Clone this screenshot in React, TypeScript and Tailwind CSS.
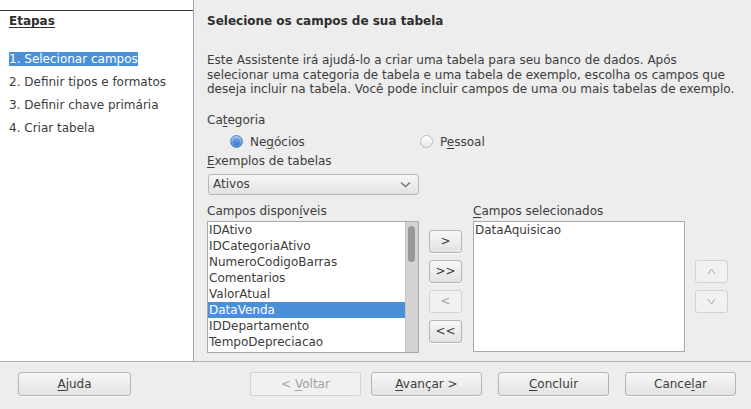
import React from 'react'

const btn =
  'flex items-center justify-center rounded-[3px] border border-[#b4b4b4] bg-gradient-to-b from-[#f7f7f7] to-[#e3e3e3] text-[#3c3c3c] shadow-[0_1px_0_rgba(255,255,255,0.8)]'
const btnOff =
  'flex items-center justify-center rounded-[3px] border border-[#d2d2d2] bg-[#f1f1f1] text-[#a3a3a3]'

const available = [
  'IDAtivo',
  'IDCategoriaAtivo',
  'NumeroCodigoBarras',
  'Comentarios',
  'ValorAtual',
  'DataVenda',
  'IDDepartamento',
  'TempoDepreciacao',
]

function Radio({ on }: { on?: boolean }) {
  if (on)
    return (
      <span className="flex h-[13px] w-[13px] items-center justify-center rounded-full border border-[#5485bd] bg-gradient-to-b from-[#a9c8ee] to-[#4a86d4]">
        <span className="h-[7px] w-[7px] rounded-full bg-gradient-to-b from-[#6fa4e6] to-[#3d7cd0]" />
      </span>
    )
  return <span className="h-[13px] w-[13px] rounded-full border border-[#bdbdbd] bg-gradient-to-b from-[#ffffff] to-[#e8e8e8]" />
}

export default function App() {
  return (
    <div className="flex h-[409px] w-[751px] flex-col overflow-hidden bg-[#ededed] font-['DejaVu_Sans',sans-serif] text-[12px] text-[#3c3c3c]">
      <div className="flex h-[361px]">
        {/* roadmap */}
        <div className="w-[194px] shrink-0 border-r border-[#a6a6a6] bg-white pt-[10px]">
          <div className="border-t border-[#3a3a3a] pl-[9px] pt-[2px]">
            <div className="font-bold leading-4 text-[#2e2e2e] underline underline-offset-2">Etapas</div>
            <div className="mt-[22px] flex flex-col gap-[7px] leading-4">
              <div>
                <span className="bg-[#4a90d9] text-white">1. Selecionar campos</span>
              </div>
              <div>2. Definir tipos e formatos</div>
              <div>3. Definir chave primária</div>
              <div>4. Criar tabela</div>
            </div>
          </div>
        </div>

        {/* page */}
        <div className="flex-1 pl-[13px] pt-[13px]">
          <div className="font-bold leading-4 text-[#2e2e2e]">Selecione os campos de sua tabela</div>
          <p className="mt-[24px] leading-[14.5px]">
            Este Assistente irá ajudá-lo a criar uma tabela para seu banco de dados. Após
            <br />
            selecionar uma categoria de tabela e uma tabela de exemplo, escolha os campos que
            <br />
            deseja incluir na tabela. Você pode incluir campos de uma ou mais tabelas de exemplo.
          </p>
          <div className="mt-[15px] leading-4">
            Ca<u className="underline-offset-2">t</u>egoria
          </div>
          <div className="mt-[6px] flex h-4 items-center leading-4">
            <div className="ml-[23px] flex w-[190px] items-center gap-[7px]">
              <Radio on />
              <span>
                Ne<u className="underline-offset-2">g</u>ócios
              </span>
            </div>
            <div className="flex items-center gap-[7px]">
              <Radio />
              <span>
                P<u className="underline-offset-2">e</u>ssoal
              </span>
            </div>
          </div>
          <div className="mt-[3px] leading-4">
            <u className="underline-offset-2">E</u>xemplos de tabelas
          </div>
          <div className="ml-px mt-[5px] flex h-[21px] w-[211px] items-center justify-between rounded-[3px] border border-[#b7b7b7] bg-gradient-to-b from-[#f7f7f7] to-[#e2e2e2] pl-[4px] pr-[7px]">
            <span>Ativos</span>
            <svg width="11" height="7" viewBox="0 0 11 7">
              <path d="M1 1.5 L5.5 5.5 L10 1.5" fill="none" stroke="#7a7a7a" strokeWidth="1.6" />
            </svg>
          </div>

          <div className="mt-[8px] flex">
            <div className="w-[212px]">
              <div className="leading-4">
                Campos dispon<u className="underline-offset-2">í</u>veis
              </div>
              <div className="mt-[2px] flex h-[132px] border border-[#a9a9a9] bg-white">
                <div className="flex-1 overflow-hidden">
                  {available.map((f) => (
                    <div
                      key={f}
                      className={`h-4 pl-[1px] leading-4 ${f === 'DataVenda' ? 'bg-[#4a90d9] text-white' : ''}`}
                    >
                      {f}
                    </div>
                  ))}
                </div>
                <div className="w-[13px] border-l border-[#c4c4c4] bg-[#d4d4d4] pl-[2px] pt-[4px]">
                  <div className="h-[36px] w-[7px] rounded-full bg-[#989898]" />
                </div>
              </div>
            </div>

            <div className="ml-[10px] flex flex-col gap-[7px] pt-[27px]">
              <button className={`${btn} h-[23px] w-[33px]`}>&gt;</button>
              <button className={`${btn} h-[23px] w-[33px]`}>&gt;&gt;</button>
              <button className={`${btnOff} h-[23px] w-[33px]`}>&lt;</button>
              <button className={`${btn} h-[23px] w-[33px]`}>&lt;&lt;</button>
            </div>

            <div className="ml-[11px] w-[212px]">
              <div className="leading-4">
                <u className="underline-offset-2">C</u>ampos selecionados
              </div>
              <div className="mt-[2px] h-[131px] border border-[#a9a9a9] bg-white pl-[1px] leading-4">
                DataAquisicao
              </div>
            </div>

            <div className="ml-[10px] flex flex-col gap-[7px] pt-[57px]">
              <button className={`${btnOff} h-[23px] w-[33px]`}>
                <svg width="9" height="7" viewBox="0 0 9 7">
                  <path d="M1 6 L4.5 1 L8 6" fill="none" stroke="#a8a8a8" strokeWidth="1" />
                </svg>
              </button>
              <button className={`${btnOff} h-[23px] w-[33px]`}>
                <svg width="9" height="7" viewBox="0 0 9 7">
                  <path d="M1 1 L4.5 6 L8 1" fill="none" stroke="#a8a8a8" strokeWidth="1" />
                </svg>
              </button>
            </div>
          </div>
        </div>
      </div>

      {/* buttons */}
      <div className="flex h-[48px] items-start border-t border-[#b0b0b0] pl-[18px] pr-[15px] pt-[10px]">
        <button className={`${btn} h-[24px] w-[113px]`}>
          <span>
            <u className="underline-offset-2">A</u>juda
          </span>
        </button>
        <button className={`${btnOff} ml-[119px] h-[24px] w-[111px]`}>
          <span>
            &lt; <u className="underline-offset-2">V</u>oltar
          </span>
        </button>
        <button className={`${btn} ml-[10px] h-[24px] w-[111px]`}>
          <span>
            <u className="underline-offset-2">A</u>vançar &gt;
          </span>
        </button>
        <button className={`${btn} ml-[16px] h-[24px] w-[111px]`}>
          <span>
            <u className="underline-offset-2">C</u>oncluir
          </span>
        </button>
        <button className={`${btn} ml-[16px] h-[24px] w-[111px]`}>
          <span>
            Cance<u className="underline-offset-2">l</u>ar
          </span>
        </button>
      </div>
    </div>
  )
}
